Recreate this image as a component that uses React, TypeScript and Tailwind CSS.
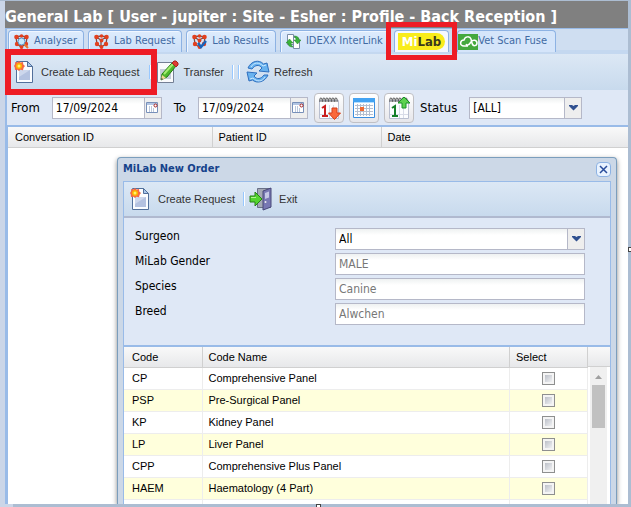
import type { ReactNode } from "react";

const TAHOMA = "font-['DejaVu_Sans_Condensed','Noto_Sans',sans-serif]";

const orders = [
  { code: "CP", name: "Comprehensive Panel" },
  { code: "PSP", name: "Pre-Surgical Panel" },
  { code: "KP", name: "Kidney Panel" },
  { code: "LP", name: "Liver Panel" },
  { code: "CPP", name: "Comprehensive Plus Panel" },
  { code: "HAEM", name: "Haematology (4 Part)" },
  { code: "", name: "" },
];

const details = [
  { id: "gender", label: "MiLab Gender", value: "MALE" },
  { id: "species", label: "Species", value: "Canine" },
  { id: "breed", label: "Breed", value: "Alwchen" },
];

function NewPageIcon() {
  return (
    <svg width="20" height="24" viewBox="0 0 20 24" className="shrink-0">
      <path d="M2.500 1.500h11l5 5v16h-16z" fill="#fbfdff" stroke="#52709b" />
      <path d="M13.500 1.500v5h5z" fill="#a9c8ed" stroke="#52709b" />
      <path d="M5 10h11v10H5z" fill="#b4c2e0" />
      <path d="M5 10h11L5 17z" fill="#cdd7ec" />
      <path d="M5 1l1.500 1.400L9 2l.3 2.400L11 6 9.600 7.800 9 10.200l-2.500-.4L5 11l-1.600-1.300L1 10 .8 7.600 0 6l1-1.800L1.200 2l2.300.3z" fill="#f46a45" />
      <circle cx="5" cy="6" r="3" fill="#ffb300" />
      <circle cx="5" cy="6" r="1.500" fill="#fff36b" />
    </svg>
  );
}

function EditPageIcon() {
  return (
    <svg width="22" height="24" viewBox="0 0 22 24" className="shrink-0">
      <path d="M.5 2.500h16v20H.5z" fill="#f9fafc" stroke="#737f94" />
      <path d="M3 9h11v10H3z" fill="#c5cdd9" />
      <path d="M4 20l1-6L15 3l4 3-9 11z" fill="#4eb82c" stroke="#257a16" />
      <path d="M7 14l9-10" stroke="#a4ec72" strokeWidth="2" />
      <path d="M15 3l2-2h2l2 2v2l-2 2z" fill="#df3d32" stroke="#a32620" />
      <path d="M4 20l1-5 4 3z" fill="#f1d798" />
      <path d="M4 20l.5-2L6 19z" fill="#333" />
    </svg>
  );
}

function RefreshIcon() {
  return (
    <svg width="24" height="24" viewBox="0 0 24 24" className="shrink-0" strokeLinejoin="round">
      <g fill="#69b3ef" stroke="#2f6fbe">
        <path d="M2 8C5 1 13-1 17.500 4L21 3l2 9-10-1 3-3c-3-4-7-3-10 1z" />
        <path d="M22 15c-3 7-11 9-15.500 5L3 21l-2-9 10 1-3 3c3 4 7 3 10-1z" />
      </g>
      <path d="M5 7c3-5 8-5 12-1l3-1M19 17c-3 5-8 5-12 1l-3 1" fill="none" stroke="#c8e7ff" />
    </svg>
  );
}

function ExitIcon() {
  return (
    <svg width="24" height="24" viewBox="0 0 24 24" className="shrink-0">
      <path d="M8.500 1.500h13v19h-13z" fill="#a4a9b5" stroke="#697087" />
      <path d="M14 4l8-3v19l-8 3z" fill="#7878b3" stroke="#484879" />
      <path d="M16 6l4-1.500v6L16 12z" fill="#c4c8e6" />
      <circle cx="16.500" cy="15" r="1" fill="#eee" />
      <path d="M1 9h5V5l7 7-7 7v-4H1z" fill="#54d42f" stroke="#278114" />
      <path d="M2 10.500h5" stroke="#b4f494" />
    </svg>
  );
}

function MoleculeIcon({ kind }: { kind: "search" | "plain" | "check" }) {
  return (
    <svg width="15" height="15" viewBox="0 0 15 15" className="shrink-0">
      <path d="M2 3l5-1 6 1-1 7-5 3-4-3zM2 3l5 3 6-3M7 6v7" fill="none" stroke="#7d4a44" strokeWidth="1.300" />
      <g fill="#e2401f">
        <circle cx="2.500" cy="3" r="2.300" />
        <circle cx="7.500" cy="2" r="1.800" />
        <circle cx="12.500" cy="3" r="2.300" />
        <circle cx="3" cy="10" r="2.200" />
        <circle cx="12" cy="10" r="2.200" />
        <circle cx="7.500" cy="13" r="1.900" />
        <circle cx="7.500" cy="6.500" r="1.900" />
      </g>
      {kind === "search" && (
        <g>
          <path d="M10 10l4 4" stroke="#e07a35" strokeWidth="2" />
          <circle cx="7.500" cy="7.500" r="3.500" fill="#c6e9fc" stroke="#5793c5" />
        </g>
      )}
      {kind === "check" && <path d="M6 9l3 4 5-6" fill="none" stroke="#1764bd" strokeWidth="2.500" />}
    </svg>
  );
}

function LinkPagesIcon() {
  return (
    <svg width="15" height="15" viewBox="0 0 15 15" className="shrink-0">
      <path d="M1.500.5h6v10h-6zM7.500 3.500h4l2 2v9h-6z" fill="#fff" stroke="#7a8da7" />
      <path d="M3.500 5L7 9H5c0 2 1 3 2 4-3 0-5-1-5-4H0zM11.500 10L8 6h2c0-2-1-3-2-4 3 0 5 1 5 4h2z" fill="#3bb43b" stroke="#218325" strokeWidth=".5" />
    </svg>
  );
}

function CalendarIcon({ arrow }: { arrow?: "down" | "up" }) {
  if (!arrow) {
    return (
      <svg width="24" height="24" viewBox="0 0 24 24">
        <path d="M1.500 2.500h21v19h-21z" fill="#fff" stroke="#3b8ee0" />
        <path d="M1 2h22v4H1z" fill="#43a3f2" />
        <path d="M2 6.500h20" stroke="#b4deff" />
        <path d="M3 9.500h18M3 12.500h18M3 15.500h18M3 18.500h18M5.500 8v12M8.500 8v12M11.500 8v12M14.500 8v12M17.500 8v12" stroke="#b5bfd0" />
        <path d="M8 11h4v4H8z" fill="#f06a32" />
      </svg>
    );
  }
  return (
    <svg width="24" height="24" viewBox="0 0 24 24">
      <path d="M2.500 4.500h19v18h-19z" fill="#fcfdff" stroke="#b9bfd0" />
      <path d="M3 18.500h18M12.500 9v13M16.500 9v13" stroke="#d8dce8" />
      <path d="M3 6c-1-6 3-5 2 0m1 0c-1-6 3-5 2 0m1 0c-1-6 3-5 2 0m1 0c-1-6 3-5 2 0m1 0c-1-6 3-5 2 0m1 0c-1-6 3-5 2 0" fill="none" stroke="#4f4f4f" />
      <path d="M5 12l3-2v10M5 20h6" fill="none" stroke={arrow === "down" ? "#c91e1e" : "#168029"} strokeWidth="2" />
      {arrow === "down" ? (
        <path d="M15 12h5v5h3.500L17.500 23.500 11.500 17H15z" fill="#fa693b" stroke="#d63c18" />
      ) : (
        <path d="M15 12V7h-4l6-6 6 6h-4v5z" fill="#5ed151" stroke="#1b912a" />
      )}
    </svg>
  );
}

function Tab({ icon, children }: { icon: ReactNode; children: ReactNode }) {
  return (
    <button className="flex h-[22px] shrink-0 items-center gap-[5px] rounded-t border border-b-0 border-[#8db2e3] bg-linear-to-b from-[#deecfd] to-[#cbdff8] pr-1.5 pl-[5px] text-[11px] whitespace-nowrap text-[#416aa3] shadow-[inset_1px_1px_0_#f0f6ff]">
      {icon}
      {children}
    </button>
  );
}

function DateField({ id, label }: { id: string; label: string }) {
  return (
    <>
      <label htmlFor={id} className="px-0.5 text-[13px]">{label}</label>
      <div className="flex h-[22px] w-[110px] shrink-0 border border-[#b5b8c8] bg-white">
        <input id={id} defaultValue="17/09/2024" className="w-full min-w-0 bg-linear-to-b from-[#eef1f1] to-white to-30% px-[3px]" />
        <button aria-label="Pick a date" className="flex w-[17px] shrink-0 items-center justify-center border-l border-[#b5b8c8] bg-[#eee]">
          <svg width="13" height="13" viewBox="0 0 13 13">
            <path d="M.5 1.500h11v10H.5z" fill="#fff" stroke="#7890b9" />
            <path d="M1 2h10v2H1z" fill="#b2c5e3" />
            <path d="M3 6h1m1 0h1M3 8h1m1 0h1m1 0h1M3 10h1m1 0h1m1 0h1" stroke="#7890b9" />
            <circle cx="9.500" cy="4.500" r="1.500" fill="#fff" stroke="#a62121" />
          </svg>
        </button>
      </div>
    </>
  );
}

function Dropdown({ id, options }: { id: string; options: string[] }) {
  return (
    <div className="relative w-full">
      <select id={id} className="block h-[22px] w-full appearance-none rounded-none border border-[#b5b8c8] bg-white bg-linear-to-b from-[#eef1f1] to-white to-30% px-[3px]">
        {options.map(o => <option key={o}>{o}</option>)}
      </select>
      <span className="pointer-events-none absolute inset-y-px right-px flex w-[17px] items-center justify-center border-l border-[#b5b8c8] bg-[#eee]">
        <svg width="9" height="6" viewBox="0 0 9 6"><path d="M0 0h3l1.500 1L6 0h3v1L4.500 5.500 0 1z" fill="#30508f" /></svg>
      </span>
    </div>
  );
}

function Separator() {
  return <span className="h-3.5 w-0.5 shrink-0 border-l border-[#98c8ff] bg-white" />;
}

function OrderWindow() {
  return (
    <section className="absolute top-[30px] right-[11px] bottom-0 left-[109px] flex flex-col rounded-t border border-b-0 border-[#7b9ebd] bg-[#ccd8e7] px-[5px] shadow-[0_2px_5px_#888]">
      <header className="flex h-[23px] shrink-0 items-center justify-between">
        <h2 className={`text-[11px] font-bold text-[#15428b] ${TAHOMA}`}>MiLab New Order</h2>
        <button aria-label="Close" className="flex size-[15px] items-center justify-center rounded-sm border border-[#8db2e3] bg-[#e9f3ff]">
          <svg width="9" height="9" viewBox="0 0 9 9"><path d="M1 1l7 7M8 1L1 8" stroke="#2a4d9b" strokeWidth="1.500" /></svg>
        </button>
      </header>
      <div className="flex min-h-0 grow flex-col border border-b-0 border-[#99bbe8] bg-[#dfe8f6]">
        <div className="flex h-9 shrink-0 items-center gap-1 border-b-2 border-[#b0b9cf] bg-linear-to-b from-[#dce8f5] to-[#c8daed] px-1.5 text-[11px] text-[#333]">
          <button className="mr-1 flex items-center gap-2"><NewPageIcon />Create Request</button>
          <Separator />
          <button className="flex items-center gap-1.5"><ExitIcon />Exit</button>
        </div>
        <div className={`grid h-[129px] shrink-0 grid-cols-[200px_250px] content-start gap-y-[3px] border-b-2 border-[#99bbe8] pt-2.5 pl-[11px] text-xs ${TAHOMA}`}>
          <label htmlFor="surgeon">Surgeon</label>
          <Dropdown id="surgeon" options={["All"]} />
          {details.map(d => (
            <div key={d.id} className="contents">
              <label htmlFor={d.id}>{d.label}</label>
              <input id={d.id} readOnly value={d.value} className="h-[22px] border border-[#b5b8c8] bg-white bg-linear-to-b from-[#eef1f1] to-white to-30% px-[3px] text-[#777]" />
            </div>
          ))}
        </div>
        <div className="flex min-h-0 grow overflow-hidden bg-white text-[11px]">
          <table className="w-full table-fixed border-collapse self-start">
            <thead>
              <tr className="h-5 bg-linear-to-b from-[#f9f9f9] to-[#e7e8ea] text-left">
                <th className="w-[78px] border-r border-b border-[#d0d0d0] px-2 font-normal">Code</th>
                <th className="border-r border-b border-[#d0d0d0] px-1.5 font-normal">Code Name</th>
                <th className="w-[78px] border-r border-b border-[#d0d0d0] px-1.5 font-normal">Select</th>
              </tr>
            </thead>
            <tbody>
              {orders.map((o, i) => (
                <tr key={i} className="h-[22px] border-b border-[#ededed] even:bg-[#ffffdc]">
                  <td className="border-r border-[#ededed] px-2">{o.code}</td>
                  <td className="border-r border-[#ededed] px-1.5">{o.name}</td>
                  <td className="border-r border-[#ededed]">
                    <input type="checkbox" aria-label={o.name} className="mx-auto block size-[13px] appearance-none border border-[#8e8f8f] bg-linear-to-br from-[#aeb3bd] to-white shadow-[inset_0_0_0_2px_#f4f4f4]" />
                  </td>
                </tr>
              ))}
            </tbody>
          </table>
          <div className="w-[22px] shrink-0">
            <div className="h-5 border-b border-[#d0d0d0] bg-linear-to-b from-[#f9f9f9] to-[#e7e8ea]" />
            <div className="mr-[3px] ml-0.5 flex h-full flex-col items-center gap-1.5 bg-[#f0f0f0] pt-2">
              <svg width="7" height="4" viewBox="0 0 7 4"><path d="M3.500 0L7 4H0z" fill="#a0a0a0" /></svg>
              <div className="h-[43px] w-[13px] bg-[#c1c1c1]" />
            </div>
          </div>
        </div>
      </div>
    </section>
  );
}

export default function App() {
  return (
    <div className="relative h-screen overflow-hidden bg-[#acbdd2] pt-px pr-[3px] font-['Liberation_Sans',Arial,sans-serif] text-black">
      <div className="flex h-full flex-col bg-[#cbd6e8] pl-[5px]">
        <h1 className={`h-[27px] shrink-0 bg-[#808080] text-base leading-8 font-bold whitespace-nowrap text-white ${TAHOMA}`}>
          General Lab [ User - jupiter : Site - Esher : Profile - Back Reception ]
        </h1>

        <main className="flex min-h-0 grow flex-col border-l-2 border-[#99bbe8] bg-[#dfe8f6]">
          <nav className={`flex h-[26px] shrink-0 items-start gap-1 border-t border-b-4 border-[#99bbe8] border-b-[#c4d8f0] bg-[#cfdef1] pt-px pl-px ${TAHOMA}`}>
            <Tab icon={<MoleculeIcon kind="search" />}>Analyser</Tab>
            <Tab icon={<MoleculeIcon kind="plain" />}>Lab Request</Tab>
            <Tab icon={<MoleculeIcon kind="check" />}>Lab Results</Tab>
            <Tab icon={<LinkPagesIcon />}>IDEXX InterLink</Tab>
            <div className="relative shrink-0">
              <button className="flex h-[22px] items-center rounded-t border border-b-0 border-[#8db2e3] bg-[#f4f8fe] px-[3px]">
                <span className="flex h-[17px] items-center rounded-r-full bg-[#f9ec1c] px-1 text-[13px] font-bold text-[#3a3a1c]">
                  <span className="text-white">Mi</span>Lab
                </span>
              </button>
              <div className="pointer-events-none absolute -inset-x-2 -top-2 z-10 h-[38px] border-[5px] border-[#ee1c25]" />
            </div>
            <button className="ml-1 flex h-[22px] shrink-0 items-center rounded-t border border-b-0 border-[#8db2e3] bg-[#d5e5fa] pr-2 text-[11px] whitespace-nowrap text-[#416aa3]">
              <svg width="20" height="16" viewBox="0 0 20 16" className="shrink-0">
                <path d="M0 0h20v16H0z" fill="#45a83e" />
                <path d="M10 12H6c-5 0-4-6 0-6 1-4 6-4 7-1l1 4c1 4 5 3 5 0s-4-4-6-1-4 4-5 2" fill="none" stroke="#fff" strokeWidth="1.500" />
              </svg>
              Vet Scan Fuse
            </button>
          </nav>

          <div className="flex h-9 shrink-0 items-center gap-1.5 bg-linear-to-b from-[#dce8f5] to-[#c8daed] pl-[7px] text-[11px] text-[#333]">
            <div className="relative mr-1 shrink-0">
              <button className="flex items-center gap-[7px]"><NewPageIcon />Create Lab Request</button>
              <div className="pointer-events-none absolute -inset-y-[11px] -right-[18px] -left-[9px] z-10 border-[6px] border-[#ee1c25]" />
            </div>
            <Separator />
            <button className="mr-0.5 flex items-center gap-1"><EditPageIcon />Transfer</button>
            <div className="flex gap-1">
              <Separator />
              <Separator />
            </div>
            <button className="flex items-center gap-1"><RefreshIcon />Refresh</button>
          </div>

          <div className={`flex h-[35px] shrink-0 items-center gap-1.5 pl-0.5 text-xs ${TAHOMA}`}>
            <div className="flex items-center gap-2.5">
              <DateField id="from" label="From" />
              <DateField id="to" label="To" />
            </div>
            <div className="flex shrink-0 gap-[5px]">
              {([["Previous day", "down"], ["Today", undefined], ["Next day", "up"]] as const).map(([label, arrow]) => (
                <button key={label} aria-label={label} className="flex size-[30px] items-center justify-center rounded-sm border border-[#c0c0c4] bg-linear-to-b from-white to-[#e6e6ea]">
                  <CalendarIcon arrow={arrow} />
                </button>
              ))}
            </div>
            <div className="flex items-center gap-3">
              <label htmlFor="status" className="text-[13px]">Status</label>
              <div className="w-[113px]"><Dropdown id="status" options={["[ALL]"]} /></div>
            </div>
          </div>

          <div className="relative min-h-0 grow overflow-hidden border-t-2 border-l border-[#99bbe8] bg-white">
            <table className="w-full table-fixed text-[11px]">
              <thead>
                <tr className="h-5 bg-linear-to-b from-[#f9f9f9] to-[#e7e8ea] text-left">
                  <th className="w-[204px] border-r border-b border-[#d0d0d0] px-[7px] font-normal">Conversation ID</th>
                  <th className="w-[169px] border-r border-b border-[#d0d0d0] px-1.5 font-normal">Patient ID</th>
                  <th className="border-b border-[#d0d0d0] px-1.5 font-normal">Date</th>
                </tr>
              </thead>
            </table>
            <OrderWindow />
          </div>
        </main>

        <div className="ml-2 h-[3px] shrink-0 bg-[#acbdd2]" />
      </div>
      <span className="absolute top-[247px] right-[-2px] size-[5px] border border-[#444] bg-white" />
      <span className="absolute bottom-0 left-1/2 h-[3px] w-[5px] border border-b-0 border-[#444] bg-white" />
    </div>
  );
}
